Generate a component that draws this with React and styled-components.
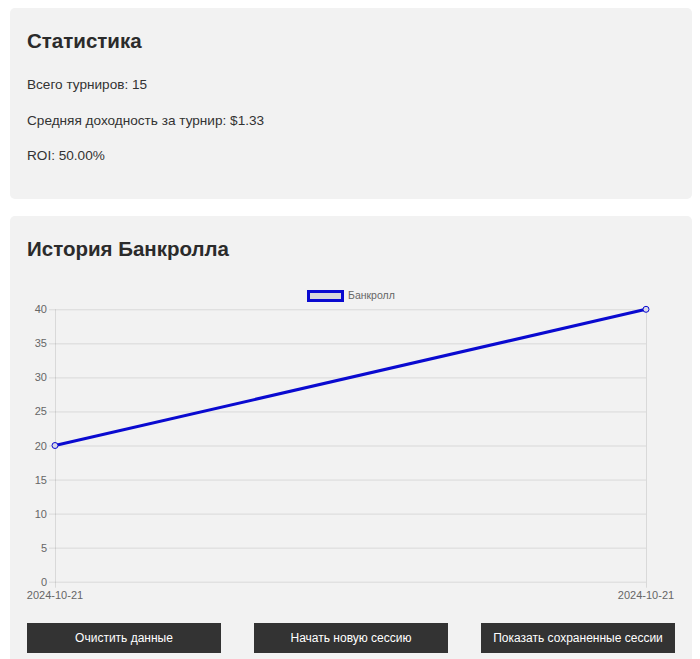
import React from "react";
import styled, { createGlobalStyle } from "styled-components";

const GlobalStyle = createGlobalStyle`
  html, body { margin: 0; padding: 0; background: #ffffff; }
  body { font-family: "Liberation Sans", Arial, sans-serif; color: #333; }
`;

const Page = styled.div`
  padding: 8px 8px 0 10px;
  display: flex;
  flex-direction: column;
  gap: 17px;
`;

const Card = styled.section`
  background: #f2f2f2;
  border-radius: 5px;
  padding: 20px 17px 18px;
`;

const Title = styled.h2`
  margin: 0 0 ${(p) => p.$gap}px;
  font-size: 20.5px;
  line-height: 25px;
  font-weight: bold;
  color: #2b2b2b;
`;

const Stat = styled.p`
  margin: 14px 0;
  font-size: 13.6px;
  line-height: 21.5px;
  color: #333;
`;

const ChartWrap = styled.div`
  height: 323px;
`;

const Buttons = styled.div`
  margin-top: 20px;
  display: grid;
  grid-template-columns: repeat(3, 194px);
  justify-content: space-between;
`;

const Button = styled.button`
  height: 30px;
  padding: 0 4px;
  background: #333333;
  color: #ffffff;
  border: none;
  border-radius: 0;
  font-family: "Liberation Sans", Arial, sans-serif;
  font-size: 12px;
  white-space: nowrap;
  cursor: pointer;
`;

const data = [
  { label: "2024-10-21", value: 20 },
  { label: "2024-10-21", value: 40 },
];

const FONT = "Liberation Sans, Arial, sans-serif";

function Chart() {
  const W = 647;
  const H = 323;
  const left = 28;
  const right = 619;
  const top = 29.3;
  const bottom = 301.7;
  const max = 40;
  const yFor = (v) => bottom - (v / max) * (bottom - top);
  const xFor = (i) => left + (i / (data.length - 1)) * (right - left);
  const ticks = [0, 5, 10, 15, 20, 25, 30, 35, 40];
  const grid = "rgba(0,0,0,0.1)";
  const blue = "#0a0ad0";
  const pts = data.map((d, i) => `${xFor(i)},${yFor(d.value)}`).join(" ");
  return (
    <svg width={W} height={H} viewBox={`0 0 ${W} ${H}`} style={{ display: "block", overflow: "visible" }}>
      <rect x={281.5} y={11.5} width={34} height={9} fill="#d8d8dc" stroke={blue} strokeWidth={3} />
      <text x={321} y={19} fontSize="10.5" fill="#666" fontFamily={FONT}>
        Банкролл
      </text>
      {ticks.map((t) => (
        <g key={t}>
          <line x1={22} x2={right} y1={yFor(t) + 0.5} y2={yFor(t) + 0.5} stroke={grid} strokeWidth={1} />
          <text x={20} y={yFor(t) + 4} fontSize="11" fill="#666" textAnchor="end" fontFamily={FONT}>
            {t}
          </text>
        </g>
      ))}
      {data.map((d, i) => (
        <g key={i}>
          <line x1={xFor(i) + 0.5} x2={xFor(i) + 0.5} y1={top} y2={bottom + 6} stroke={grid} strokeWidth={1} />
          <text x={xFor(i)} y={319} fontSize="11" fill="#666" textAnchor="middle" fontFamily={FONT}>
            {d.label}
          </text>
        </g>
      ))}
      <polyline points={pts} fill="none" stroke={blue} strokeWidth={3} />
      {data.map((d, i) => (
        <circle key={i} cx={xFor(i)} cy={yFor(d.value)} r={3} fill="#d8d8e8" stroke={blue} strokeWidth={1} />
      ))}
    </svg>
  );
}

export default function App() {
  return (
    <>
      <GlobalStyle />
      <Page>
        <Card>
          <Title $gap={21}>Статистика</Title>
          <Stat>Всего турниров: 15</Stat>
          <Stat>Средняя доходность за турнир: $1.33</Stat>
          <Stat>ROI: 50.00%</Stat>
        </Card>
        <Card>
          <Title $gap={19}>История Банкролла</Title>
          <ChartWrap>
            <Chart />
          </ChartWrap>
          <Buttons>
            <Button>Очистить данные</Button>
            <Button>Начать новую сессию</Button>
            <Button>Показать сохраненные сессии</Button>
          </Buttons>
        </Card>
      </Page>
    </>
  );
}
